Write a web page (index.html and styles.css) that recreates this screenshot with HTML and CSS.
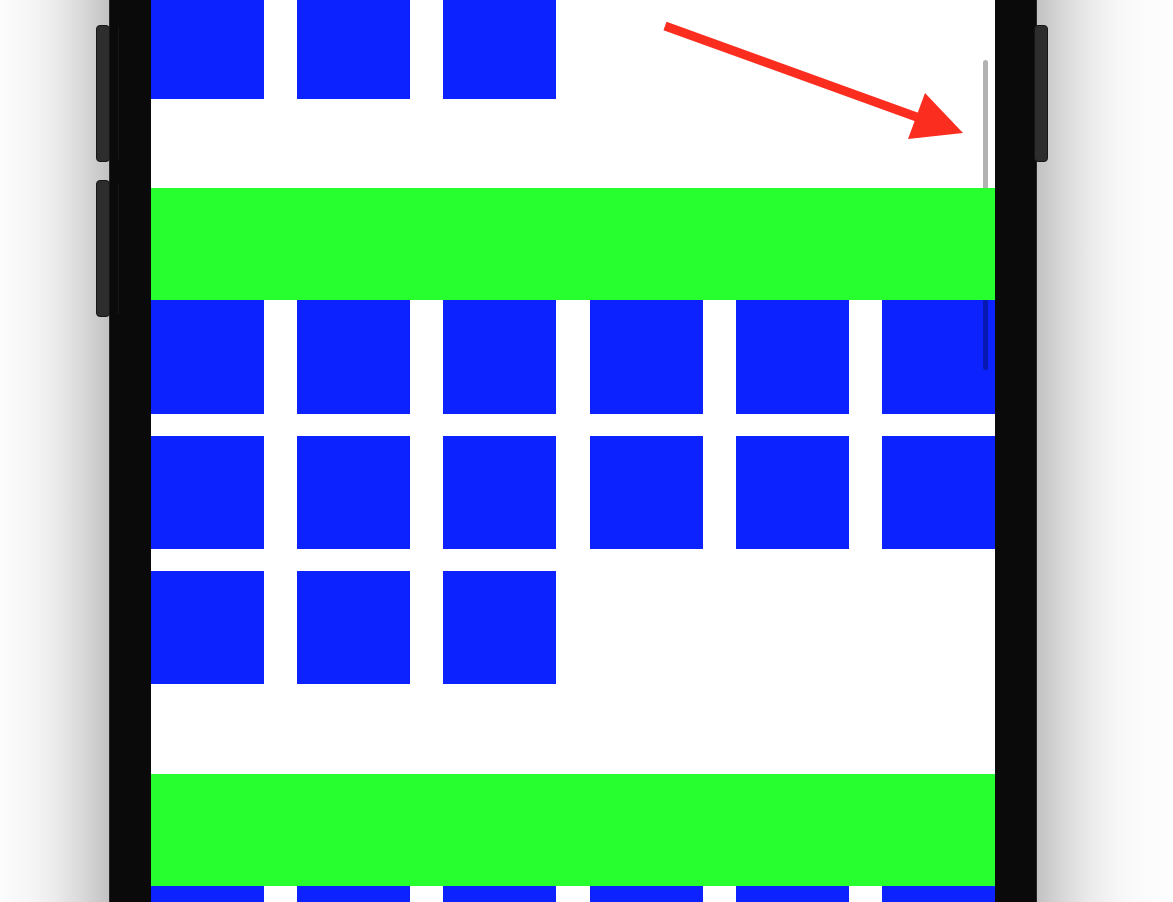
FILE: index.html
```html
<!DOCTYPE html>
<html lang="en">
<head>
<meta charset="utf-8">
<title>Sticky headers grid</title>
<link rel="stylesheet" href="styles.css">
</head>
<body>
<div class="stage">
  <div class="phone">
    <span class="btn btn-left btn-upper"></span>
    <span class="btn btn-left btn-lower"></span>
    <span class="btn btn-right"></span>
    <div class="screen">
      <div class="section">
        <div class="grid grid-cut">
          <div class="tile"></div><div class="tile"></div><div class="tile"></div>
        </div>
      </div>
      <div class="section">
        <div class="header"></div>
        <div class="grid">
          <div class="tile"></div><div class="tile"></div><div class="tile"></div>
          <div class="tile"></div><div class="tile"></div><div class="tile"></div>
          <div class="tile"></div><div class="tile"></div><div class="tile"></div>
          <div class="tile"></div><div class="tile"></div><div class="tile"></div>
          <div class="tile"></div><div class="tile"></div><div class="tile"></div>
        </div>
      </div>
      <div class="section">
        <div class="header"></div>
        <div class="grid grid-end">
          <div class="tile"></div><div class="tile"></div><div class="tile"></div>
          <div class="tile"></div><div class="tile"></div><div class="tile"></div>
        </div>
      </div>
      <div class="scrollbar"></div>
      <svg class="arrow" viewBox="151 0 844 160" width="844" height="160" aria-hidden="true">
        <line x1="665" y1="26" x2="918" y2="117.5" stroke="#fb2d1e" stroke-width="9"/>
        <polygon points="925,93 963,133 908,139" fill="#fb2d1e"/>
      </svg>
    </div>
  </div>
</div>
</body>
</html>
```
FILE: styles.css
```css
html, body {
  margin: 0;
  padding: 0;
  background: #ffffff;
  overflow: hidden;
  font-family: "Liberation Sans", Arial, sans-serif;
}

.stage {
  width: 1173px;
  height: 902px;
  display: flex;
  padding-left: 109px;
  box-sizing: border-box;
  background: linear-gradient(to right,
    #fcfcfc 0px,
    #f7f7f7 27px,
    #ececec 54px,
    #d9d9d9 82px,
    #c2c2c2 109px,
    #c2c2c2 1037px,
    #d9d9d9 1064px,
    #ececec 1092px,
    #f7f7f7 1119px,
    #fcfcfc 1147px,
    #fefefe 1173px);
}

.phone {
  position: relative;
  width: 928px;
  height: 902px;
  box-sizing: border-box;
  padding: 0 41px;
  background: #0a0a0a;
  border-left: 1px solid #262626;
  border-right: 1px solid #262626;
}

.btn {
  position: absolute;
  width: 14px;
  height: 137px;
  box-sizing: border-box;
  background: #2d2d2d;
  border: 1px solid #161616;
  border-radius: 4px;
}

.btn-left { left: -14px; }
.btn-upper { top: 25px; }
.btn-lower { top: 180px; }
.btn-right { right: -12px; top: 25px; }

.btn-left::after {
  content: "";
  position: absolute;
  left: 21px;
  top: 2px;
  bottom: 2px;
  width: 1px;
  background: #171717;
}

.screen {
  position: relative;
  width: 844px;
  height: 902px;
  background: #ffffff;
  overflow: hidden;
  display: flex;
  flex-direction: column;
}

.section {
  padding-bottom: 89.6px;
  flex-shrink: 0;
}

.header {
  position: relative;
  z-index: 2;
  height: 112px;
  background: #27ff2e;
}

.grid {
  display: grid;
  grid-template-columns: repeat(6, 113.1px);
  grid-auto-rows: 113.3px;
  justify-content: space-between;
  row-gap: 22px;
}

.grid-cut {
  grid-auto-rows: 98.7px;
}

.grid-end {
  grid-auto-rows: 16.2px;
}

.tile {
  background: #0c23ff;
}

.scrollbar {
  position: absolute;
  z-index: 1;
  left: 832px;
  top: 60px;
  width: 5px;
  height: 310px;
  border-radius: 3px;
  background: rgba(0, 0, 0, 0.3);
}

.arrow {
  position: absolute;
  z-index: 3;
  left: 0;
  top: 0;
}
```
